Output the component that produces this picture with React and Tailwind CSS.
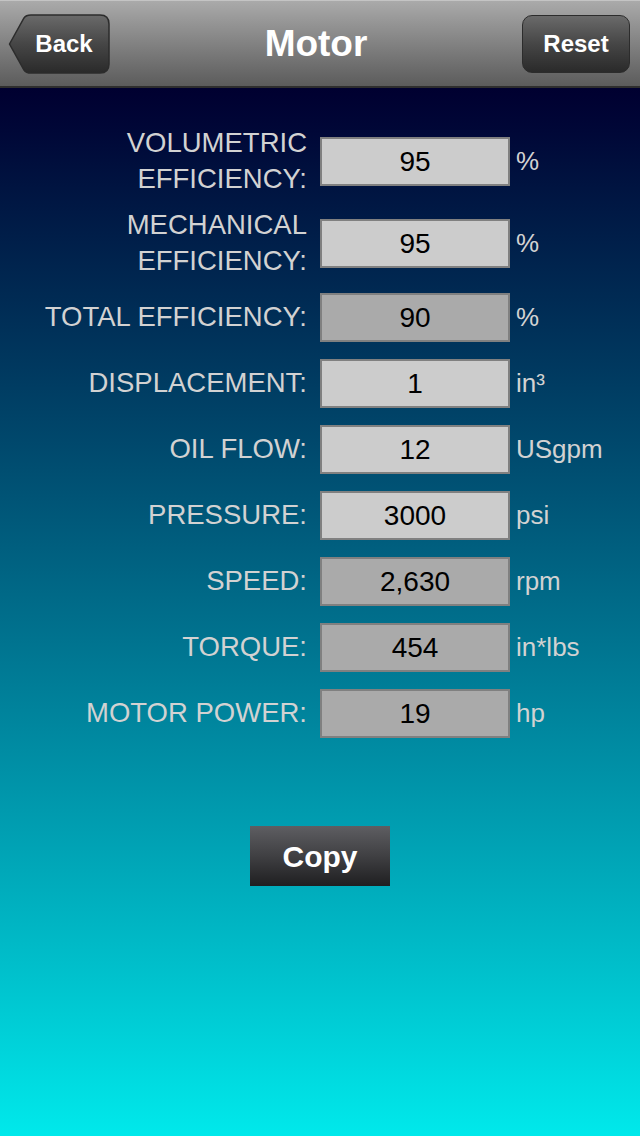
import React from 'react';

const rows = [
  { label: ['VOLUMETRIC', 'EFFICIENCY:'], value: '95', unit: '%', editable: true },
  { label: ['MECHANICAL', 'EFFICIENCY:'], value: '95', unit: '%', editable: true },
  { label: ['TOTAL EFFICIENCY:'], value: '90', unit: '%', editable: false },
  { label: ['DISPLACEMENT:'], value: '1', unit: 'in³', editable: true },
  { label: ['OIL FLOW:'], value: '12', unit: 'USgpm', editable: true },
  { label: ['PRESSURE:'], value: '3000', unit: 'psi', editable: true },
  { label: ['SPEED:'], value: '2,630', unit: 'rpm', editable: false },
  { label: ['TORQUE:'], value: '454', unit: 'in*lbs', editable: false },
  { label: ['MOTOR POWER:'], value: '19', unit: 'hp', editable: false },
];

const BackButton = () => (
  <button className="relative w-[102px] h-[60px] flex items-center justify-center pl-[10px]">
    <svg className="absolute inset-0" width="102" height="60" viewBox="0 0 102 60">
      <defs>
        <linearGradient id="backg" x1="0" y1="0" x2="0" y2="1">
          <stop offset="0" stopColor="#6a6a6a" />
          <stop offset="0.5" stopColor="#464646" />
          <stop offset="1" stopColor="#2a2a2a" />
        </linearGradient>
      </defs>
      <path
        d="M1.5 30 L16 4 Q18 1 23 1 H92 Q101 1 101 10 V50 Q101 59 92 59 H23 Q18 59 16 56 Z"
        fill="url(#backg)"
        stroke="#2c2c2c"
        strokeWidth="1.5"
      />
    </svg>
    <span className="relative text-white font-bold text-[24px] leading-none">Back</span>
  </button>
);

const App = () => {
  return (
    <div className="w-[640px] h-[1136px] flex flex-col font-['Liberation_Sans',Arial,sans-serif] overflow-hidden">
      {/* Nav bar */}
      <header className="h-[88px] shrink-0 flex items-center justify-between px-[8px] bg-linear-to-b from-[#aaaaaa] to-[#5c5c5c] border-t border-[#c4c4c4] border-b-2 border-b-[#2e2e2e]">
        <BackButton />
        <h1 className="text-white font-bold text-[37px] leading-none">Motor</h1>
        <button className="w-[108px] h-[58px] mr-[2px] rounded-[10px] border border-[#2c2c2c] bg-linear-to-b from-[#6a6a6a] via-[#464646] to-[#2a2a2a] text-white font-bold text-[24px]">
          Reset
        </button>
      </header>

      {/* Form */}
      <main className="flex-1 flex flex-col bg-linear-to-b from-[#000030] to-[#00e9eb] pt-[32px]">
        {rows.map((row, i) => (
          <div key={i} className={`flex items-center ${row.label.length > 1 ? 'h-[82px]' : 'h-[66px]'}`}>
            <div className="w-[307px] text-right text-[#d2d2d2] text-[27.5px] leading-[36px]">
              {row.label.map((l, j) => (
                <div key={j}>{l}</div>
              ))}
            </div>
            <div
              className={`ml-[13px] w-[190px] h-[49px] pt-[2px] border-2 border-[#808080] flex items-center justify-center text-black text-[28px] ${
                row.editable ? 'bg-[#cccccc]' : 'bg-[#aaaaaa]'
              }`}
            >
              {row.value}
            </div>
            <div className="ml-[6px] text-[#d2d2d2] text-[26px]">{row.unit}</div>
          </div>
        ))}

        <div className="flex justify-center mt-[80px]">
          <button className="w-[140px] h-[60px] bg-linear-to-b from-[#5e5e62] via-[#404043] to-[#1f1f21] text-white font-bold text-[30px]">
            Copy
          </button>
        </div>
      </main>
    </div>
  );
};

export default App;
